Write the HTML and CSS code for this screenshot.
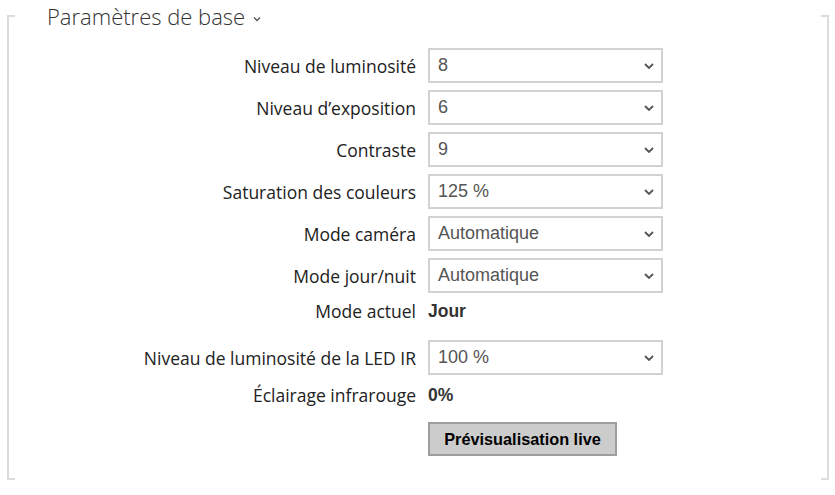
FILE: index.html
```html
<!DOCTYPE html>
<html lang="fr">
<head>
<meta charset="utf-8">
<title>Paramètres de base</title>
<link rel="stylesheet" href="styles.css">
</head>
<body>
<section class="frame">
  <h2 class="title">Paramètres de base <svg class="title-chev" width="8" height="6" viewBox="0 0 8 6"><path d="M1 1.5 L4 4.5 L7 1.5" fill="none" stroke="#555" stroke-width="1.4"/></svg></h2>
  <div class="form">
    <div class="row">
      <label class="lbl">Niveau de luminosité</label>
      <div class="select"><span>8</span><svg class="chev" width="10" height="6" viewBox="0 0 10 6"><path d="M1 1 L5 5 L9 1" fill="none" stroke="#555" stroke-width="1.8"/></svg></div>
    </div>
    <div class="row">
      <label class="lbl">Niveau d’exposition</label>
      <div class="select"><span>6</span><svg class="chev" width="10" height="6" viewBox="0 0 10 6"><path d="M1 1 L5 5 L9 1" fill="none" stroke="#555" stroke-width="1.8"/></svg></div>
    </div>
    <div class="row">
      <label class="lbl">Contraste</label>
      <div class="select"><span>9</span><svg class="chev" width="10" height="6" viewBox="0 0 10 6"><path d="M1 1 L5 5 L9 1" fill="none" stroke="#555" stroke-width="1.8"/></svg></div>
    </div>
    <div class="row">
      <label class="lbl">Saturation des couleurs</label>
      <div class="select"><span>125 %</span><svg class="chev" width="10" height="6" viewBox="0 0 10 6"><path d="M1 1 L5 5 L9 1" fill="none" stroke="#555" stroke-width="1.8"/></svg></div>
    </div>
    <div class="row">
      <label class="lbl">Mode caméra</label>
      <div class="select"><span>Automatique</span><svg class="chev" width="10" height="6" viewBox="0 0 10 6"><path d="M1 1 L5 5 L9 1" fill="none" stroke="#555" stroke-width="1.8"/></svg></div>
    </div>
    <div class="row">
      <label class="lbl">Mode jour/nuit</label>
      <div class="select"><span>Automatique</span><svg class="chev" width="10" height="6" viewBox="0 0 10 6"><path d="M1 1 L5 5 L9 1" fill="none" stroke="#555" stroke-width="1.8"/></svg></div>
    </div>
    <div class="row text-row mode-row">
      <label class="lbl">Mode actuel</label>
      <div class="value">Jour</div>
    </div>
    <div class="row">
      <label class="lbl">Niveau de luminosité de la LED IR</label>
      <div class="select"><span>100 %</span><svg class="chev" width="10" height="6" viewBox="0 0 10 6"><path d="M1 1 L5 5 L9 1" fill="none" stroke="#555" stroke-width="1.8"/></svg></div>
    </div>
    <div class="row text-row ir-row">
      <label class="lbl">Éclairage infrarouge</label>
      <div class="value">0%</div>
    </div>
    <div class="row btn-row">
      <span class="lbl"></span>
      <button class="btn">Prévisualisation live</button>
    </div>
  </div>
</section>
</body>
</html>
```
FILE: styles.css
```css
html, body {
  margin: 0;
  padding: 0;
  background: #fff;
}

.frame {
  box-sizing: border-box;
  display: flex;
  flex-direction: column;
  margin: 15px 0 0 7px;
  width: 822px;
  height: 465px;
  border-left: 2px solid #dcdcdc;
  border-right: 2px solid #dcdcdc;
  background:
    linear-gradient(#dcdcdc, #dcdcdc) left top / 6px 2px no-repeat,
    linear-gradient(#dcdcdc, #dcdcdc) right top / 6px 2px no-repeat,
    linear-gradient(#dcdcdc, #dcdcdc) left bottom / 6px 2px no-repeat,
    linear-gradient(#dcdcdc, #dcdcdc) right bottom / 6px 2px no-repeat;
}

.title {
  margin: -15px 0 0 38px;
  height: 33px;
  font-family: "Open Sans", "Noto Sans", sans-serif;
  font-weight: 300;
  font-size: 22px;
  line-height: 31px;
  color: #333;
  display: flex;
  align-items: center;
  gap: 8px;
}

.title-chev {
  margin-top: 4px;
}

.form {
  display: flex;
  flex-direction: column;
  gap: 7px;
  margin-top: 15px;
}

.row {
  display: flex;
  align-items: center;
  gap: 12px;
}

.lbl {
  width: 407px;
  text-align: right;
  font-family: "Open Sans", "Noto Sans", sans-serif;
  font-size: 17.5px;
  color: #222;
}

.select {
  box-sizing: border-box;
  width: 235px;
  height: 35px;
  border: 2px solid #d2d2d2;
  display: flex;
  align-items: center;
  justify-content: space-between;
  padding: 0 7px 0 8px;
  font-family: "Liberation Sans", Arial, sans-serif;
  font-size: 18px;
  color: #555;
}

.text-row {
  height: 22px;
}

.mode-row {
  margin-bottom: 11px;
}

.ir-row {
  height: 26px;
}

.value {
  font-family: "Liberation Sans", Arial, sans-serif;
  font-weight: bold;
  font-size: 17.5px;
  color: #333;
}

.btn-row {
  margin-top: 7px;
}

.btn {
  box-sizing: border-box;
  width: 189px;
  height: 34px;
  background: #cccccc;
  border: 2px solid #9e9e9e;
  border-radius: 0;
  font-family: "Liberation Sans", Arial, sans-serif;
  font-weight: bold;
  font-size: 16.3px;
  color: #000;
  padding: 0;
}
```
